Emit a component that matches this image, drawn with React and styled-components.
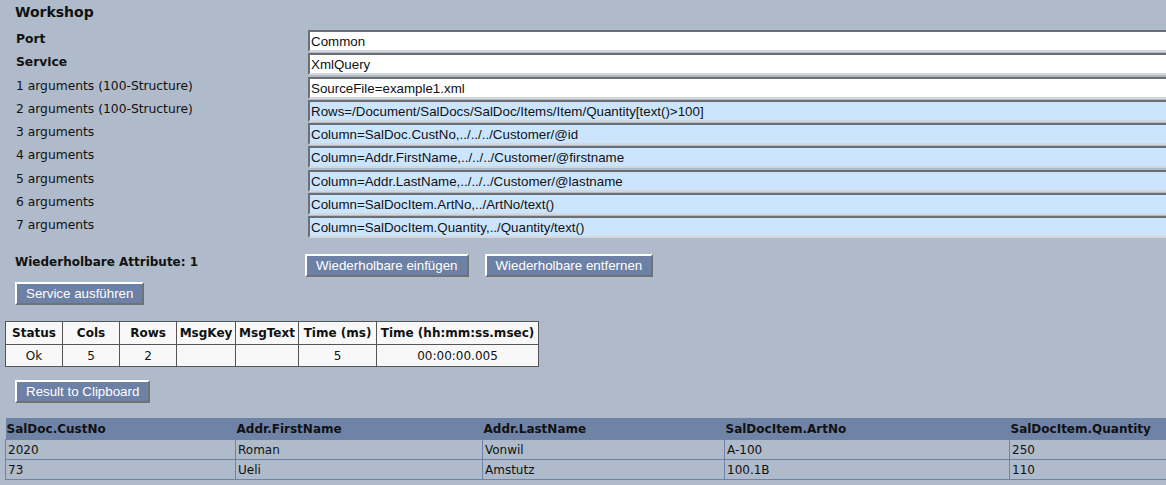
import styled, { createGlobalStyle } from 'styled-components';

const args = [
  { label: 'Port', value: 'Common', bold: true },
  { label: 'Service', value: 'XmlQuery', bold: true },
  { label: '1 arguments (100-Structure)', value: 'SourceFile=example1.xml' },
  { label: '2 arguments (100-Structure)', value: 'Rows=/Document/SalDocs/SalDoc/Items/Item/Quantity[text()>100]', blue: true },
  { label: '3 arguments', value: 'Column=SalDoc.CustNo,../../../Customer/@id', blue: true },
  { label: '4 arguments', value: 'Column=Addr.FirstName,../../../Customer/@firstname', blue: true },
  { label: '5 arguments', value: 'Column=Addr.LastName,../../../Customer/@lastname', blue: true },
  { label: '6 arguments', value: 'Column=SalDocItem.ArtNo,../ArtNo/text()', blue: true },
  { label: '7 arguments', value: 'Column=SalDocItem.Quantity,../Quantity/text()', blue: true },
];

const statusCols = [
  ['Status', 57, 'Ok'],
  ['Cols', 57, '5'],
  ['Rows', 57, '2'],
  ['MsgKey', 59, ''],
  ['MsgText', 63, ''],
  ['Time (ms)', 78, '5'],
  ['Time (hh:mm:ss.msec)', 162, '00:00:00.005'],
];

const resultCols = [
  ['SalDoc.CustNo', 230],
  ['Addr.FirstName', 247],
  ['Addr.LastName', 242],
  ['SalDocItem.ArtNo', 285],
  ['SalDocItem.Quantity', 157],
];

const resultRows = [
  ['2020', 'Roman', 'Vonwil', 'A-100', '250'],
  ['73', 'Ueli', 'Amstutz', '100.1B', '110'],
];

function App() {
  return (
    <Page>
      <GlobalStyle />
      <Heading>Workshop</Heading>
      <ArgRows>
        {args.map((a) => (
          <ArgRow key={a.label}>
            <ArgLabel $bold={a.bold}>{a.label}</ArgLabel>
            <ArgInput $blue={a.blue} readOnly value={a.value} />
          </ArgRow>
        ))}
      </ArgRows>
      <RepeatRow>
        <RepeatLabel>Wiederholbare Attribute: 1</RepeatLabel>
        <RepeatButtons>
          <Button>Wiederholbare einfügen</Button>
          <Button>Wiederholbare entfernen</Button>
        </RepeatButtons>
      </RepeatRow>
      <ActionRow>
        <Button>Service ausführen</Button>
      </ActionRow>
      <StatusTable>
        <colgroup>
          {statusCols.map(([name, width]) => (
            <col key={name} width={width} />
          ))}
        </colgroup>
        <thead>
          <tr>
            {statusCols.map(([name]) => (
              <StatusHead key={name}>{name}</StatusHead>
            ))}
          </tr>
        </thead>
        <tbody>
          <tr>
            {statusCols.map(([name, , value]) => (
              <StatusCell key={name}>{value}</StatusCell>
            ))}
          </tr>
        </tbody>
      </StatusTable>
      <ClipboardRow>
        <Button>Result to Clipboard</Button>
      </ClipboardRow>
      <ResultTable>
        <colgroup>
          {resultCols.map(([name, width]) => (
            <col key={name} width={width} />
          ))}
        </colgroup>
        <thead>
          <tr>
            {resultCols.map(([name]) => (
              <ResultHead key={name}>{name}</ResultHead>
            ))}
          </tr>
        </thead>
        <tbody>
          {resultRows.map((row) => (
            <tr key={row[0]}>
              {row.map((value) => (
                <ResultCell key={value}>{value}</ResultCell>
              ))}
            </tr>
          ))}
        </tbody>
      </ResultTable>
    </Page>
  );
}

const GlobalStyle = createGlobalStyle`
  html, body {
    margin: 0;
    background: #afbbca;
    overflow: hidden;
  }
`;

const Page = styled.div`
  width: 1166px;
  height: 485px;
  overflow: hidden;
  background: #afbbca;
  font-family: "DejaVu Sans", Verdana, sans-serif;
  font-size: 12px;
  color: #000;
`;

const Heading = styled.h1`
  margin: 0;
  padding: 4px 0 0 15px;
  height: 30px;
  box-sizing: border-box;
  font-size: 14px;
  line-height: 17px;
  font-weight: bold;
  color: #111;
`;

const ArgRows = styled.div`
  display: flex;
  flex-direction: column;
  gap: 1.25px;
`;

const ArgRow = styled.div`
  display: flex;
  height: 22px;
  width: 1300px;
`;

const ArgLabel = styled.div`
  width: 308px;
  flex: none;
  box-sizing: border-box;
  padding: 2px 0 0 16px;
  font-size: 12.3px;
  line-height: 15px;
  font-weight: ${(p) => (p.$bold ? 'bold' : 'normal')};
  color: #111;
`;

const ArgInput = styled.input`
  flex: 1;
  height: 22px;
  box-sizing: border-box;
  margin: 0;
  padding: 1px 1px 0 1px;
  border: 2px solid;
  border-color: #6b6f73 #d4d7db #d4d7db #6b6f73;
  background: ${(p) => (p.$blue ? '#cce5ff' : '#fff')};
  font-family: "Liberation Sans", Arial, sans-serif;
  font-size: 13.33px;
  color: #111;
  outline: none;
`;

const RepeatRow = styled.div`
  display: flex;
  padding: 16px 0 0 15px;
  height: 30px;
`;

const RepeatLabel = styled.div`
  width: 290px;
  flex: none;
  font-size: 12px;
  font-weight: bold;
  line-height: 16px;
  color: #111;
`;

const RepeatButtons = styled.div`
  display: flex;
  gap: 16px;
  align-items: flex-start;
`;

const Button = styled.button`
  height: 23px;
  padding: 0 9px;
  box-sizing: border-box;
  border: 2px solid;
  border-color: #fff #6f7276 #6f7276 #fff;
  background: #6d81a6;
  color: #fff;
  font-family: "Liberation Sans", Arial, sans-serif;
  font-size: 13.33px;
  line-height: 17px;
  white-space: nowrap;
`;

const ActionRow = styled.div`
  display: flex;
  padding: 0 0 0 15px;
  margin-top: -2px;
`;

const StatusTable = styled.table`
  margin: 16px 0 0 5px;
  width: 533px;
  table-layout: fixed;
  border-collapse: collapse;
  background: #f8f8f8;
  font-size: 12px;
  color: #111;
`;

const StatusHead = styled.th`
  height: 22px;
  padding: 0;
  border: 1px solid #555;
  font-weight: bold;
  text-align: center;
  white-space: nowrap;
`;

const StatusCell = styled.td`
  height: 21px;
  padding: 0;
  border: 1px solid #555;
  text-align: center;
`;

const ClipboardRow = styled.div`
  display: flex;
  padding-left: 15px;
  margin-top: 13px;
`;

const ResultTable = styled.table`
  margin: 15px 0 0 5px;
  width: 1161px;
  table-layout: fixed;
  border-collapse: collapse;
  font-size: 12px;
  color: #111;
`;

const ResultHead = styled.th`
  height: 21px;
  padding: 0 1px;
  background: #6f83a6;
  text-align: left;
  font-weight: bold;
  font-size: 12px;
  white-space: nowrap;
`;

const ResultCell = styled.td`
  height: 19px;
  padding: 0 2px;
  border: 1px solid #6f83a6;
`;

export default App;
